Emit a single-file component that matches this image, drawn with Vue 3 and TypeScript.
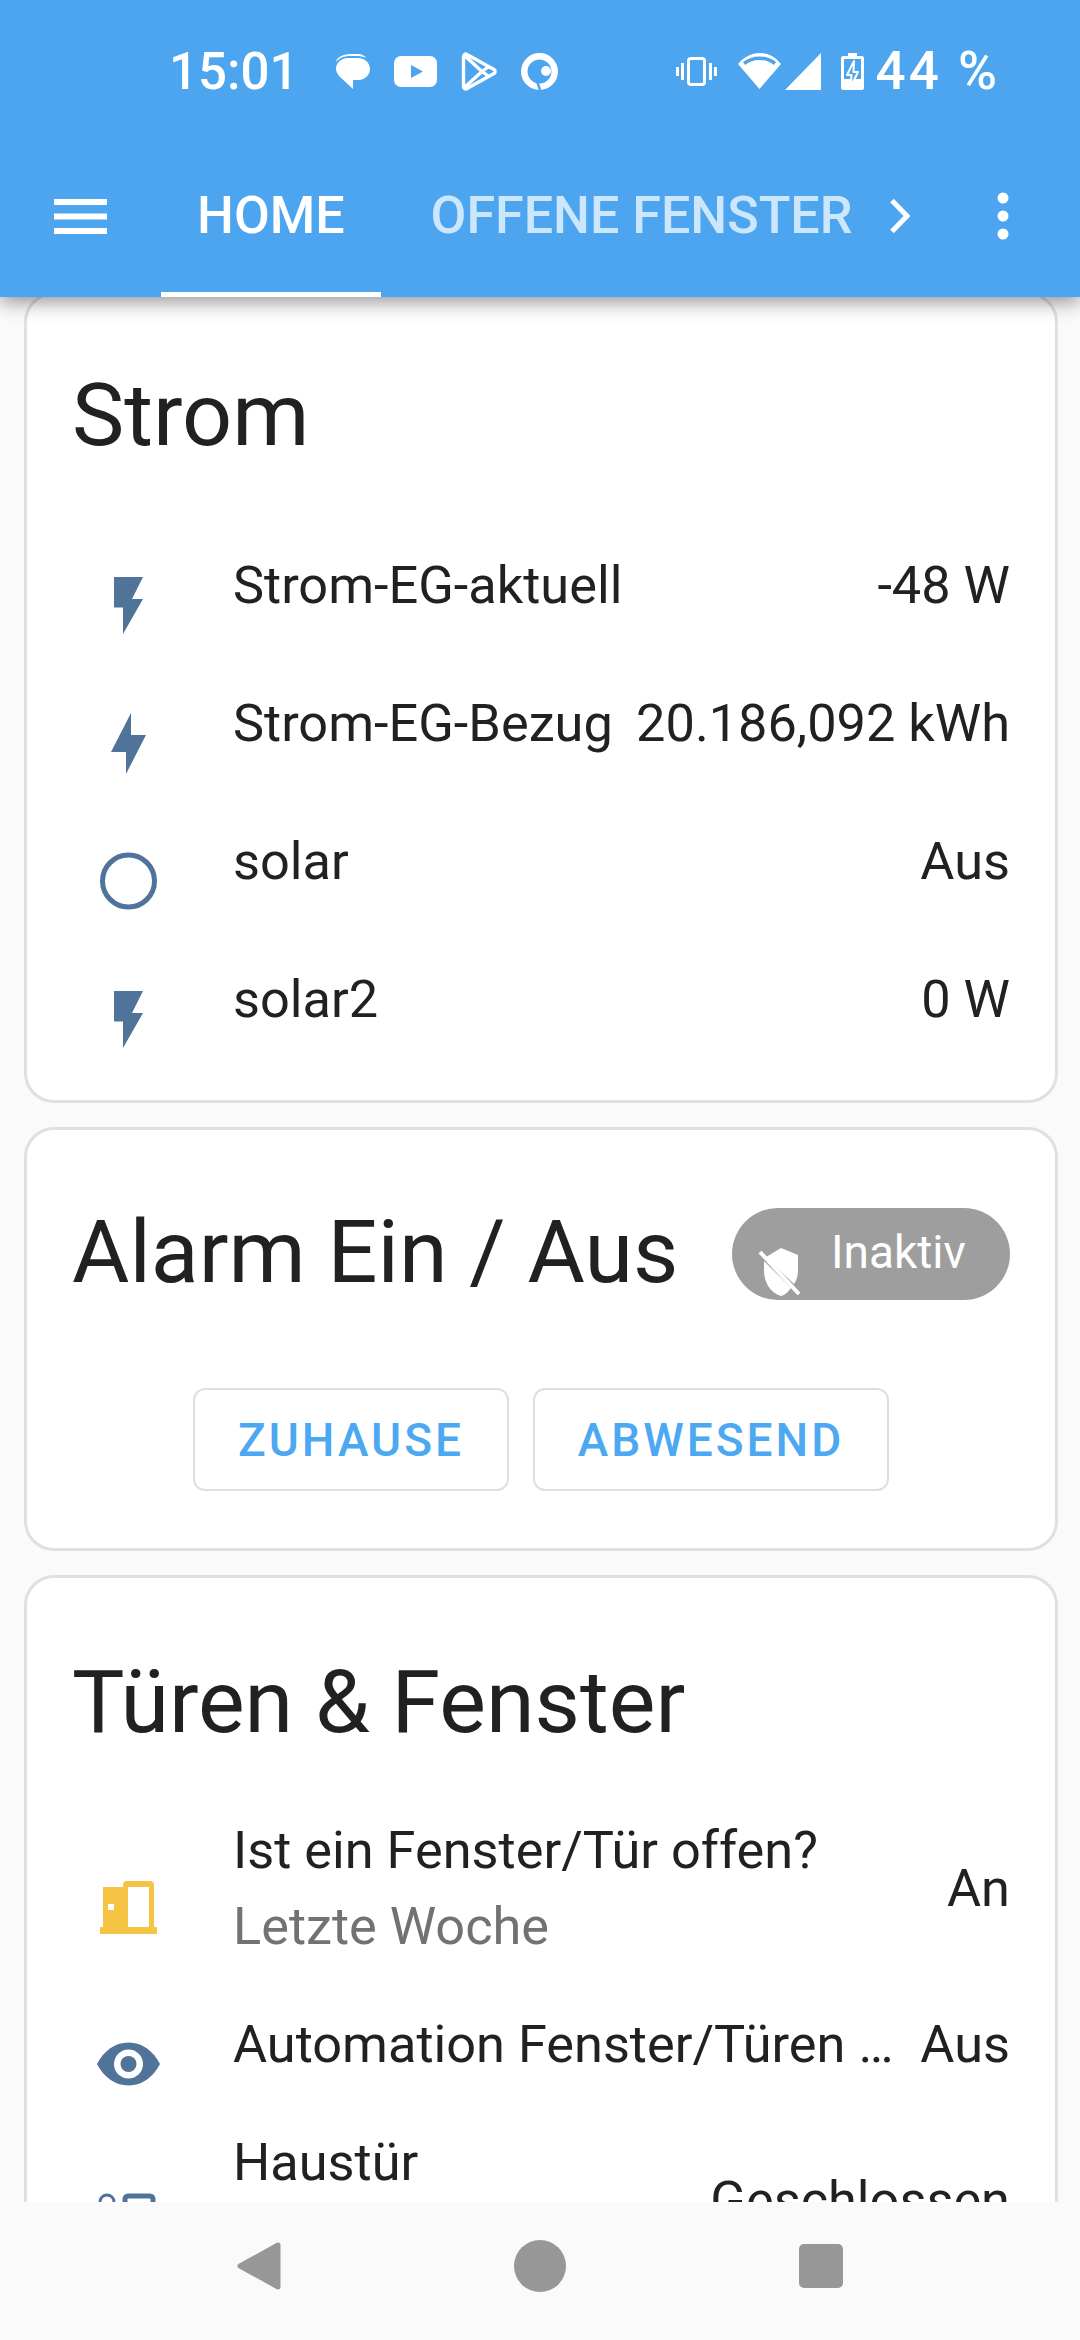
<template>
  <div class="screen">
    <header class="appbar">
      <div class="status">
        <span class="clock">15:01</span>
        <div class="notif">
          <svg width="35" height="35" viewBox="0 0 35 35"><path d="M15 0h8c4 0 7 2 8 4-2-1-5-2-8-2h-8C9 2 4 4 1 8c0-4 7-8 14-8z" fill="#fff" /><path d="M13 4h10c7 0 12 5 12 11s-5 11-12 11h-5v9L4 22C2 19 1 17 1 15 1 9 6 4 13 4z" fill="#fff" /></svg>
          <svg width="43" height="31" viewBox="0 0 43 31"><rect width="43" height="31" rx="7" fill="#fff" /><path d="M17 9l12 6.500-12 6.500z" fill="#4ca5ee" /></svg>
          <svg width="36" height="39" viewBox="0 0 36 39"><path d="M2.500 4.500c0-2 2-3 3.500-2L33 17.500c1.500 1 1.500 3 0 4L6 36.500c-1.500 1-3.500 0-3.500-2zM4 4l17 15.500L4 35M21 19.500l7.500-5.500M21 19.500l7.500 5.500" fill="none" stroke="#fff" stroke-width="3.400" stroke-linejoin="round" /></svg>
          <svg width="37" height="37" viewBox="0 0 37 37"><circle cx="18.500" cy="18.500" r="15.200" fill="none" stroke="#fff" stroke-width="6.500" /><circle cx="25" cy="18" r="5" fill="#fff" /><path d="M16 28l3 9" stroke="#4ca5ee" stroke-width="2.500" /></svg>
        </div>
        <div class="sys">
          <svg class="vibrate" width="41" height="29" viewBox="0 0 41 29"><rect x="12.500" y="1.500" width="16" height="26" rx="2.500" fill="none" stroke="#fff" stroke-width="3" /><path d="M6.500 6v17M1.500 10v9M34.500 6v17M39.500 10v9" stroke="#fff" stroke-width="3" /></svg>
          <svg class="wifi" width="43" height="36" viewBox="0 0 43 36"><path d="M21.500 36L0 11C6 4 13 0 21.500 0S37 4 43 11z" fill="#fff" /><path d="M6 10.500c9-7 22-7 31 0" fill="none" stroke="#4ca5ee" stroke-width="3.500" /></svg>
          <svg class="signal" width="36" height="37" viewBox="0 0 36 37"><path d="M36 0v37H0z" fill="#fff" /></svg>
          <svg class="batt" width="23" height="37" viewBox="0 0 23 37"><path d="M7 0h9v3h5c1 0 2 1 2 2v30c0 1-1 2-2 2H2c-1 0-2-1-2-2V5c0-1 1-2 2-2h5z" fill="#fff" /><rect x="3" y="6" width="17" height="28" fill="#4ca5ee" /><rect x="3" y="26" width="17" height="8" fill="#fff" /><path d="M13 8L6 22h4.500l-1 12L17 19h-4.500z" fill="#4ca5ee" stroke="#fff" stroke-width="2" stroke-linejoin="round" /></svg>
          <span class="level">44 %</span>
        </div>
      </div>
      <div class="toolbar">
        <svg class="menu" width="53" height="35" viewBox="0 0 53 35"><path d="M0 0h53v6H0zM0 14.500h53v6H0zM0 29h53v6H0z" fill="#fff" /></svg>
        <div class="tabs">
          <div class="tab active">HOME</div>
          <div class="tab">OFFENE FENSTER</div>
        </div>
        <svg class="chev" width="20" height="34" viewBox="0 0 20 34"><path d="M2 1.500L17 17 2 32.500" fill="none" stroke="#fff" stroke-width="5" /></svg>
        <svg class="more" width="12" height="48" viewBox="0 0 12 48"><circle cx="6" cy="6" r="5.500" fill="#fff" /><circle cx="6" cy="24" r="5.500" fill="#fff" /><circle cx="6" cy="42" r="5.500" fill="#fff" /></svg>
      </div>
    </header>

    <main class="content">
      <section class="card strom">
        <h1 class="title">Strom</h1>
        <div v-for="row in stromRows" :key="row.name" class="row">
          <span class="icon">
            <svg width="72" height="72" viewBox="0 0 72 72">
              <path v-if="row.icon === 'bolt'" d="M22 8h29L40 30h11L31 65V38.500h-9z" fill="#4f7399" />
              <path v-else-if="row.icon === 'boltUp'" d="M39 6v22h15L34 67V45H19z" fill="#4f7399" />
              <circle v-else cx="36.500" cy="36" r="26" fill="none" stroke="#4f7399" stroke-width="5" />
            </svg>
          </span>
          <span class="name">{{ row.name }}</span>
          <span class="value">{{ row.value }}</span>
        </div>
      </section>

      <section class="card alarm">
        <div class="alarm-head">
          <h1 class="title">Alarm Ein / Aus</h1>
          <div class="pill">
            <svg class="shield" width="48" height="52" viewBox="0 0 48 52"><path d="M24 2l17 7v14c0 6-1 11-4 15L9 11zM7 15l27 27c-3 4-6 7-10 8C13 47 7 36 7 24z" fill="#fff" /><path d="M3 6l39 42" stroke="#fff" stroke-width="4" /></svg>
            <span>Inaktiv</span>
          </div>
        </div>
        <div class="actions">
          <button class="action zuhause">ZUHAUSE</button>
          <button class="action abwesend">ABWESEND</button>
        </div>
      </section>

      <section class="card doors">
        <h1 class="title">Türen &amp; Fenster</h1>
        <div class="row two-line">
          <span class="icon">
            <svg width="72" height="72" viewBox="0 0 72 72"><path d="M8 55h57v7H8zM11 15h25v40H11z" fill="#f6c445" /><path d="M31 13a4 4 0 0 1 4-4h23a4 4 0 0 1 4 4v42H31z" fill="#f6c445" /><path d="M36 15h21v40H36zM16 32h6v6h-6z" fill="#fff" /></svg>
          </span>
          <div class="name">
            <div>Ist ein Fenster/Tür offen?</div>
            <div class="sub">Letzte Woche</div>
          </div>
          <span class="value">An</span>
        </div>
        <div class="row">
          <span class="icon">
            <svg width="72" height="72" viewBox="0 0 72 72"><path d="M36.500 14.500c14 0 25 9 31.500 21.500-6.500 12.500-17.500 21.500-31.500 21.500S11.500 48.500 5 36c6.500-12.500 17.500-21.500 31.500-21.500z" fill="#4f7399" /><circle cx="36.500" cy="36" r="14.500" fill="#fff" /><circle cx="36.500" cy="36" r="8" fill="#4f7399" /></svg>
          </span>
          <span class="name">Automation Fenster/Türen …</span>
          <span class="value">Aus</span>
        </div>
        <div class="row two-line">
          <span class="icon">
            <svg width="72" height="72" viewBox="0 0 72 72"><path d="M8 24v-6a7 7 0 0 1 14 0v6" fill="none" stroke="#4f7399" stroke-width="3" /><rect x="5" y="18" width="20" height="18" fill="#4f7399" /><path d="M33 62V15a3 3 0 0 1 3-3h22a3 3 0 0 1 3 3v47" fill="none" stroke="#4f7399" stroke-width="5" /></svg>
          </span>
          <div class="name">
            <div>Haustür</div>
            <div class="sub">Letzte Woche</div>
          </div>
          <span class="value">Geschlossen</span>
        </div>
      </section>
    </main>

    <nav class="navbar">
      <svg width="44" height="48" viewBox="0 0 44 48"><path d="M41 3v42L3 24z" fill="#979797" stroke="#979797" stroke-width="5" stroke-linejoin="round" /></svg>
      <svg width="52" height="52" viewBox="0 0 52 52"><circle cx="26" cy="26" r="26" fill="#979797" /></svg>
      <svg width="44" height="44" viewBox="0 0 44 44"><rect width="44" height="44" rx="5" fill="#979797" /></svg>
    </nav>
  </div>
</template>

<script setup lang="ts">
interface StromRow {
  name: string;
  value: string;
  icon: 'bolt' | 'boltUp' | 'circle';
}

const stromRows: StromRow[] = [
  { name: 'Strom-EG-aktuell', value: '-48 W', icon: 'bolt' },
  { name: 'Strom-EG-Bezug', value: '20.186,092 kWh', icon: 'boltUp' },
  { name: 'solar', value: 'Aus', icon: 'circle' },
  { name: 'solar2', value: '0 W', icon: 'bolt' },
];
</script>

<style>
html,
body {
  margin: 0;
  background: #fafafa;
}
</style>

<style scoped>
.screen {
  width: 1080px;
  height: 2340px;
  display: flex;
  flex-direction: column;
  overflow: hidden;
  background: #fafafa;
  color: #212121;
  font-family: Roboto, sans-serif;
}

.appbar {
  position: relative;
  z-index: 2;
  height: 297px;
  flex: none;
  background: #4ca5ee;
  color: #fff;
  box-shadow: 0 5px 18px rgba(0, 0, 0, 0.42);
}

.status {
  height: 142px;
  display: flex;
  align-items: center;
  padding: 0 80px 0 169px;
  box-sizing: border-box;
}

.clock {
  font-size: 51px;
  font-weight: 500;
  width: 166px;
}

.notif {
  display: flex;
  align-items: center;
  gap: 24px;
}

.sys {
  margin-left: auto;
  display: flex;
  align-items: center;
}

.wifi {
  margin-left: 21px;
}

.signal {
  margin-left: 4px;
}

.batt {
  margin-left: 20px;
}

.level {
  font-size: 53px;
  font-weight: 500;
  letter-spacing: 3px;
  margin-left: 12px;
}

.toolbar {
  height: 155px;
  display: flex;
  align-items: center;
}

.menu {
  margin-left: 54px;
  margin-bottom: 7px;
}

.tabs {
  display: flex;
  margin-left: 54px;
  height: 100%;
}

.tab {
  font-size: 52px;
  font-weight: 500;
  line-height: 52px;
  padding: 48px 36px 0;
  box-sizing: border-box;
  color: #cce7fb;
  white-space: nowrap;
}

.tab + .tab {
  margin-left: 14px;
}

.tab.active {
  color: #fff;
  border-bottom: 5px solid #fff;
}

.chev {
  margin-left: 2px;
  margin-bottom: 7px;
}

.more {
  margin-left: 87px;
  margin-bottom: 7px;
}

.content {
  flex: 1;
  min-height: 0;
  overflow: hidden;
  padding: 0 22px 0 24px;
  margin-top: -5px;
}

.card {
  background: #fff;
  border: 3px solid #e0e0e0;
  border-radius: 30px;
  box-sizing: border-box;
  padding: 0 45px;
  margin-bottom: 24px;
}

.title {
  margin: 0;
  font-size: 88px;
  font-weight: 400;
  line-height: 120px;
}

.strom {
  height: 811px;
  padding-top: 60px;
}

.strom .title {
  margin-bottom: 50px;
}

.row {
  display: flex;
  align-items: center;
  min-height: 120px;
  margin-bottom: 18px;
  font-size: 52.300px;
}

.row.two-line {
  min-height: 156px;
}

.icon {
  flex: none;
  width: 161px;
  height: 72px;
  margin-top: 40px;
}

.icon svg {
  display: block;
  margin-left: 20px;
}

.name {
  flex: 1;
  min-width: 0;
  white-space: nowrap;
}

.sub {
  color: #727272;
  margin-top: 14px;
}

.value {
  flex: none;
  margin-left: 24px;
}

.alarm {
  height: 424px;
  padding-top: 66px;
}

.alarm-head {
  display: flex;
  align-items: center;
  justify-content: space-between;
}

.alarm .title {
  margin-top: -4px;
}

.pill {
  position: relative;
  width: 278px;
  height: 92px;
  border-radius: 46px;
  background: #9e9e9e;
  color: #fff;
  font-size: 46px;
  display: flex;
  align-items: center;
  padding-left: 99px;
  box-sizing: border-box;
  padding-bottom: 4px;
}

.shield {
  position: absolute;
  left: 25px;
  bottom: 2px;
}

.actions {
  display: flex;
  justify-content: center;
  gap: 24px;
  margin-top: 76px;
}

.action {
  height: 103px;
  border: 2.500px solid #dfdfdf;
  border-radius: 12px;
  background: #fff;
  color: #4ca8f0;
  font-family: Roboto, sans-serif;
  font-size: 46px;
  font-weight: 500;
  letter-spacing: 3px;
  padding: 0;
}

.zuhause {
  width: 316px;
}

.abwesend {
  width: 356px;
}

.doors {
  padding-top: 64px;
}

.doors .title {
  margin-bottom: 48px;
}

.navbar {
  position: relative;
  z-index: 2;
  height: 138px;
  flex: none;
  background: #fafafa;
  display: flex;
  align-items: center;
  padding-left: 237px;
  gap: 233px;
  padding-bottom: 10px;
  box-sizing: border-box;
}
</style>
